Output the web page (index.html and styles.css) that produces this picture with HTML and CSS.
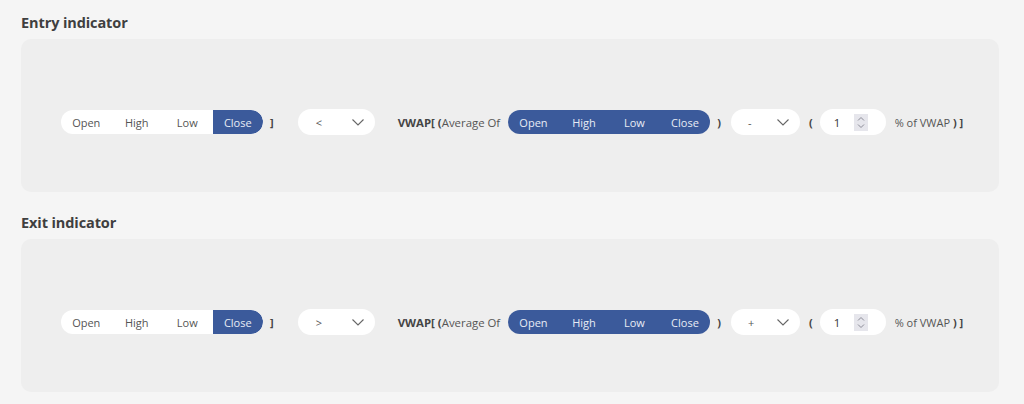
FILE: index.html
```html
<!DOCTYPE html>
<html>
<head>
<meta charset="utf-8">
<link rel="stylesheet" href="styles.css">
</head>
<body>
<section class="block">
  <h2 class="title">Entry indicator</h2>
  <div class="panel">
    <div class="row">
      <div class="seg">
        <span class="opt">Open</span><span class="opt">High</span><span class="opt">Low</span><span class="opt on last">Close</span>
      </div>
      <span class="br br1">]</span>
      <div class="drop dd1"><span class="val">&lt;</span><svg class="chev" width="12" height="7" viewBox="0 0 12 7"><path d="M0.5 0.5 L6 6 L11.5 0.5" fill="none" stroke="#666" stroke-width="1.1"/></svg></div>
      <span class="lbl"><b>VWAP[ (</b>Average Of</span>
      <div class="seg blue">
        <span class="opt">Open</span><span class="opt">High</span><span class="opt">Low</span><span class="opt">Close</span>
      </div>
      <span class="br br2">)</span>
      <div class="drop dd2"><span class="val">-</span><svg class="chev" width="12" height="7" viewBox="0 0 12 7"><path d="M0.5 0.5 L6 6 L11.5 0.5" fill="none" stroke="#666" stroke-width="1.1"/></svg></div>
      <span class="br br3">(</span>
      <div class="num"><span class="nv">1</span><span class="spin"><svg width="8" height="13" viewBox="0 0 8 13"><path d="M1 4.5 L4 1.5 L7 4.5 M1 8.5 L4 11.5 L7 8.5" fill="none" stroke="#8a8a96" stroke-width="1"/></svg></span></div>
      <span class="lbl pct">% of VWAP <b>) ]</b></span>
    </div>
  </div>
</section>
<section class="block">
  <h2 class="title">Exit indicator</h2>
  <div class="panel">
    <div class="row">
      <div class="seg">
        <span class="opt">Open</span><span class="opt">High</span><span class="opt">Low</span><span class="opt on last">Close</span>
      </div>
      <span class="br br1">]</span>
      <div class="drop dd1"><span class="val">&gt;</span><svg class="chev" width="12" height="7" viewBox="0 0 12 7"><path d="M0.5 0.5 L6 6 L11.5 0.5" fill="none" stroke="#666" stroke-width="1.1"/></svg></div>
      <span class="lbl"><b>VWAP[ (</b>Average Of</span>
      <div class="seg blue">
        <span class="opt">Open</span><span class="opt">High</span><span class="opt">Low</span><span class="opt">Close</span>
      </div>
      <span class="br br2">)</span>
      <div class="drop dd2"><span class="val">+</span><svg class="chev" width="12" height="7" viewBox="0 0 12 7"><path d="M0.5 0.5 L6 6 L11.5 0.5" fill="none" stroke="#666" stroke-width="1.1"/></svg></div>
      <span class="br br3">(</span>
      <div class="num"><span class="nv">1</span><span class="spin"><svg width="8" height="13" viewBox="0 0 8 13"><path d="M1 4.5 L4 1.5 L7 4.5 M1 8.5 L4 11.5 L7 8.5" fill="none" stroke="#8a8a96" stroke-width="1"/></svg></span></div>
      <span class="lbl pct">% of VWAP <b>) ]</b></span>
    </div>
  </div>
</section>
</body>
</html>
```
FILE: styles.css
```css
html, body {
  margin: 0;
  padding: 0;
  background: #f5f5f5;
  font-family: "Open Sans", "Noto Sans", sans-serif;
  color: #444;
}
body {
  padding: 12px 25px 0 21px;
}
.block {
  margin-bottom: 20px;
}
.title {
  margin: 0;
  font-size: 14.5px;
  line-height: 22px;
  font-weight: 700;
  color: #3f3f3f;
  letter-spacing: -0.1px;
}
.panel {
  margin-top: 5px;
  background: #eeeeee;
  border-radius: 10px;
  height: 153px;
  box-sizing: border-box;
  padding: 70px 0 0 40px;
}
.row {
  display: flex;
  align-items: center;
  height: 26px;
  font-size: 11px;
}
.seg {
  display: flex;
  height: 24px;
  background: #fff;
  border-radius: 12px;
  overflow: hidden;
}
.opt {
  width: 50.5px;
  display: flex;
  align-items: center;
  justify-content: center;
  color: #555;
  font-size: 11px;
}
.opt.on {
  background: #3b5a9b;
  color: #e8ecf5;
  border-radius: 0 12px 12px 0;
}
.seg.blue {
  background: #3b5a9b;
  margin-left: 8px;
}
.seg.blue .opt {
  color: #e8ecf5;
}
.br {
  font-weight: 700;
  color: #444;
  font-size: 11px;
}
.br1 { margin-left: 7px; }
.br2 { margin-left: 7px; }
.br3 { margin-left: 9px; }
.drop {
  height: 26px;
  background: #fff;
  border-radius: 13px;
  display: flex;
  align-items: center;
  box-sizing: border-box;
}
.dd1 {
  width: 77px;
  margin-left: 24px;
  padding-left: 18px;
}
.dd1 .chev { margin-left: 30px; }
.dd2 {
  width: 69px;
  margin-left: 10px;
  padding-left: 17px;
}
.dd2 .chev { margin-left: 23px; }
.val {
  width: 6px;
  color: #555;
  font-size: 11px;
}
.lbl {
  margin-left: 23px;
  color: #555;
  font-size: 11.4px;
  white-space: nowrap;
}
.lbl b {
  color: #444;
}
.num {
  margin-left: 7px;
  width: 66px;
  height: 26px;
  background: #fff;
  border-radius: 13px;
  display: flex;
  align-items: center;
  box-sizing: border-box;
  padding-left: 14px;
}
.nv {
  width: 20px;
  font-size: 11.5px;
  color: #333;
}
.spin {
  width: 14px;
  height: 17px;
  background: #e6e6ec;
  display: flex;
  align-items: center;
  justify-content: center;
}
.pct {
  margin-left: 9px;
  font-size: 11px;
}
```
